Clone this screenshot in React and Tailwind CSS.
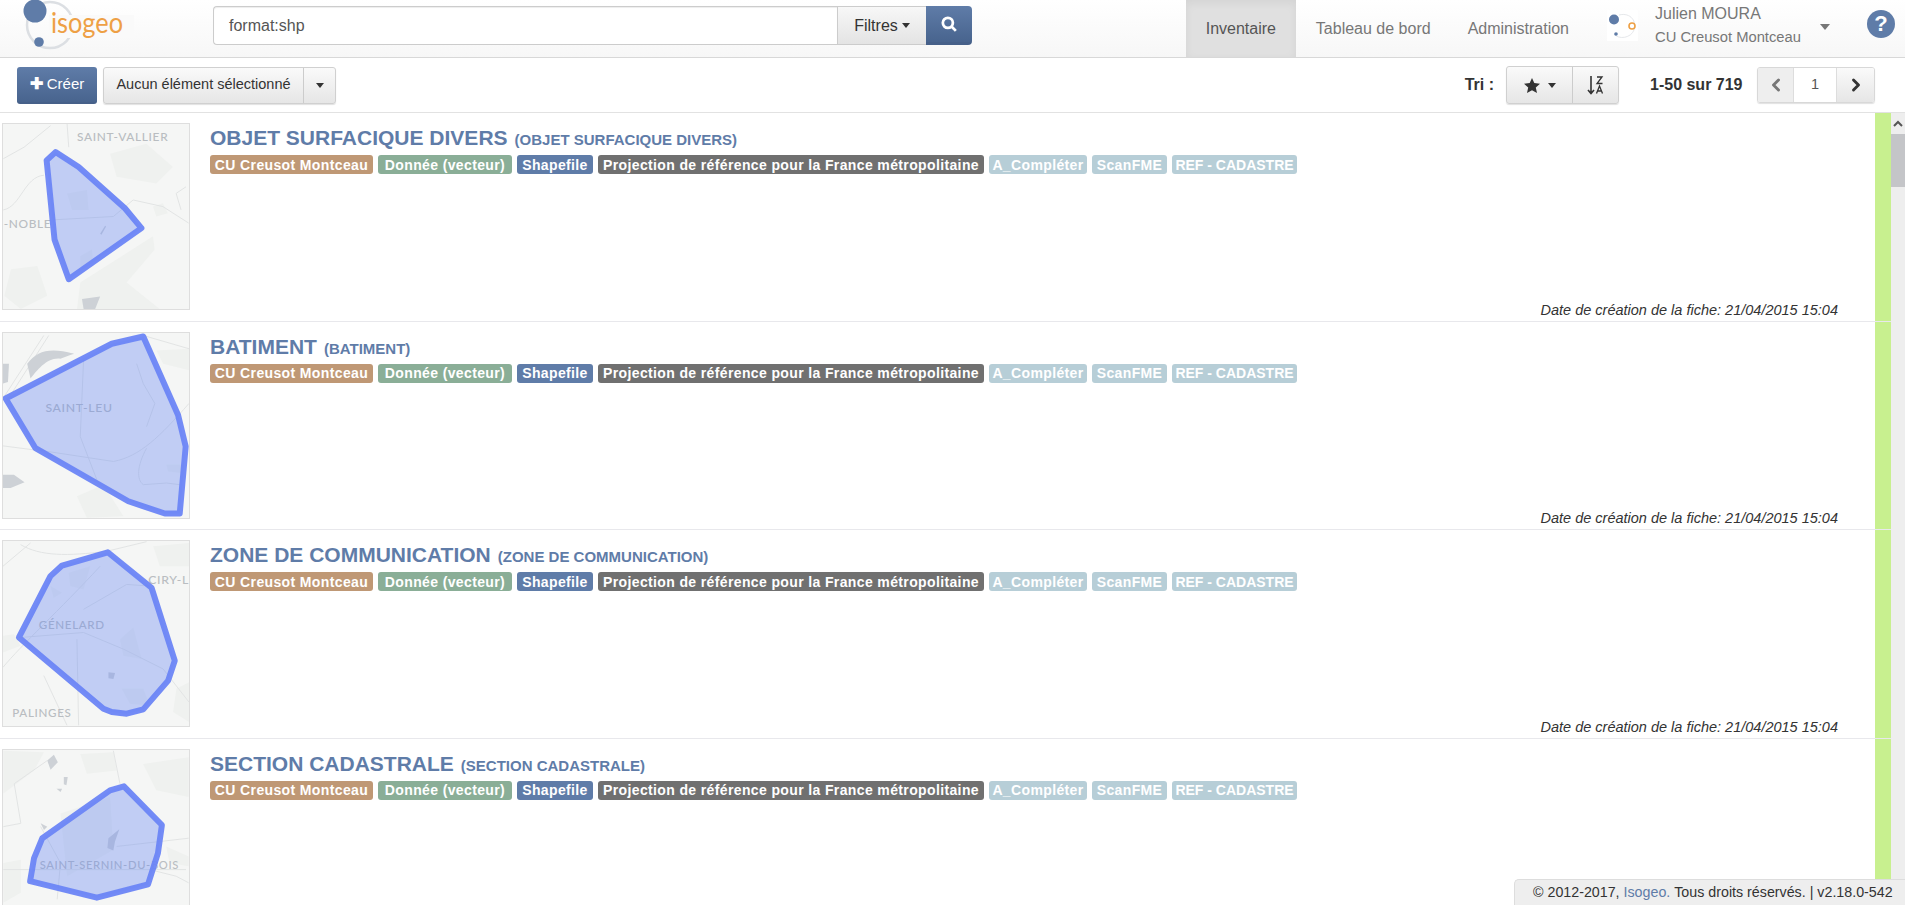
import { ChevronLeft, ChevronRight } from "lucide-react";

const FONT = "font-['Liberation_Sans',Arial,sans-serif]";

const RECORDS = [
  {
    title: "OBJET SURFACIQUE DIVERS",
    box: "7 40 561 560",
    poly: "165,125 138,150 162,390 205,510 425,355 375,295 235,170",
    roads: ["M7,145 L70,110 L150,45", "M7,300 C60,290 70,200 130,195", "M160,330 L340,320 L400,270 L490,290 L568,340", "M200,40 L205,110", "M560,230 L530,250 L545,300"],
    blobs: ["M200,250 L260,240 L265,300 L215,300 Z", "M240,440 L275,420 L280,470 L240,480 Z", "M30,480 L110,470 L140,560 L60,600 L10,560 Z", "M330,130 L440,100 L520,170 L470,220 L350,200 Z", "M240,520 L460,380 L465,420 L380,520 L480,600 L230,600 Z", "M460,290 L490,280 L505,310 L470,320 Z"],
    water: ["M245,570 L300,562 L285,600 L250,600 Z", "M300,372 L315,348 L318,350 L304,375 Z"],
    labels: [["SAINT-VALLIER", 230, 90, 36], ["-NOBLE", 8, 356, 36]],
    showDate: true,
  },
  {
    title: "BATIMENT",
    box: "7 38 561 557",
    poly: "430,48 335,70 15,235 105,385 385,545 495,582 540,582 558,380 535,285",
    roads: ["M7,235 L130,45", "M20,240 L145,45", "M430,45 L568,85", "M7,378 L100,390", "M110,390 L340,425 C420,410 480,350 568,250", "M440,385 C410,440 410,480 430,495 L500,490 L540,495", "M410,130 L430,190 L465,250 L440,320", "M250,120 L240,350 L290,480", "M130,100 L220,100"],
    blobs: ["M470,90 L568,85 L568,150 L490,130 Z", "M230,530 L310,495 L370,590 L260,595 Z", "M500,435 L548,435 L548,460 L505,455 Z"],
    water: ["M80,130 C110,90 150,80 220,100 L180,115 C140,110 110,150 90,175 Z", "M7,465 L40,465 L72,488 L30,505 L7,505 Z", "M7,130 L25,130 L22,185 L7,190 Z"],
    labels: [["SAINT-LEU", 135, 275, 37]],
    showDate: true,
  },
  {
    title: "ZONE DE COMMUNICATION",
    box: "7 34 561 558",
    poly: "323,68 185,108 150,140 55,325 310,540 335,550 380,555 430,542 505,455 525,395 455,175",
    roads: ["M60,45 C120,80 200,80 320,65 L440,36", "M7,415 C60,350 180,240 300,110", "M60,325 L250,310 L370,360 L490,420 L568,520", "M230,330 L235,590", "M250,240 L380,165 L450,170", "M90,40 L7,110", "M130,440 L200,590"],
    blobs: ["M360,330 L400,295 L425,390 L370,380 Z", "M365,480 L430,480 L450,530 L390,525 Z", "M205,130 L270,110 L250,180 L210,170 Z", "M150,170 L185,190 L160,205 Z", "M7,320 L40,315 L60,350 L7,370 Z", "M460,50 L568,40 L568,110 L480,110 Z", "M530,480 L568,460 L568,580 L520,550 Z"],
    water: ["M325,430 L345,432 L340,450 L325,448 Z"],
    labels: [["CIRY-L", 445, 165, 37], ["GÉNELARD", 115, 299, 35], ["PALINGES", 35, 565, 35]],
    showDate: true,
  },
  {
    title: "SECTION CADASTRALE",
    box: "7 658 561 560",
    poly: "372,768 330,780 125,925 100,985 88,1055 290,1105 445,1065 475,970 487,885",
    roads: ["M40,760 L140,690", "M40,760 L60,880 L7,890", "M340,660 L360,760", "M120,890 L180,1000 L170,1110", "M350,950 L568,925", "M450,1020 L530,1040 L568,1060", "M7,1020 L560,1020"],
    blobs: ["M180,850 L330,800 L340,960 L200,1040 Z", "M7,660 L130,665 L100,720 L7,790 Z", "M240,670 L340,665 L350,720 L260,730 Z", "M430,700 L568,680 L568,800 L470,780 Z", "M500,950 L568,980 L568,1010 L510,1000 Z", "M7,1000 L60,990 L60,1090 L7,1120 Z"],
    water: ["M140,690 L160,672 L172,695 L150,718 Z", "M190,740 L202,740 L198,765 L190,762 Z", "M168,775 L185,775 L180,785 Z", "M325,925 L358,898 L345,935 L340,962 L322,955 Z", "M120,880 L140,890 L130,900 Z"],
    labels: [["SAINT-SERNIN-DU-BOIS", 117, 1017, 34]],
    showDate: false,
  },
];

const TAGS = [
  ["CU Creusot Montceau", "bg-[#bf9875]", "w-[163px] tracking-[0.37px]"],
  ["Donnée (vecteur)", "bg-[#8aae97]", "w-[134px] tracking-[0.37px]"],
  ["Shapefile", "bg-[#5f7ca8]", "w-[76px] tracking-[0.37px]"],
  ["Projection de référence pour la France métropolitaine", "bg-[#707070]", "w-[386px] tracking-[0.37px]"],
  ["A_Compléter", "bg-[#b7ced7]", "w-[98px] tracking-[0.37px]"],
  ["ScanFME", "bg-[#b7ced7]", "w-[75px] tracking-[0.37px]"],
  ["REF - CADASTRE", "bg-[#b7ced7]", "w-[125px]"],
];

function Caret({ className = "" }) {
  return <span className={`inline-block border-x-[4px] border-t-[5px] border-x-transparent border-t-current ${className}`} />;
}

function Logo() {
  return (
    <svg width="125" height="56" viewBox="0 0 125 56" className="shrink-0">
      <circle cx="34" cy="25" r="23" fill="none" stroke="#dcdfe3" strokeWidth="2.5" />
      <circle cx="19" cy="11" r="11.5" fill="#5f7ca8" />
      <circle cx="23" cy="42" r="4.8" fill="#5f7ca8" />
      <rect x="33" y="15" width="85" height="23" fill="#fafafa" />
      <text x="35" y="33" fontFamily="Lato, sans-serif" fontSize="29" fill="#eea045" textLength="72" lengthAdjust="spacingAndGlyphs">isogeo</text>
    </svg>
  );
}

function Avatar() {
  return (
    <svg width="31" height="31" viewBox="0 0 31 31" className="bg-white">
      <path d="M12 5 C24 2 30 12 27 20 C24 28 12 30 7 24" fill="none" stroke="#e6e8eb" strokeWidth="1" />
      <circle cx="7" cy="9.5" r="5" fill="#5f7ca8" />
      <circle cx="9" cy="24" r="1.8" fill="#5f7ca8" />
      <circle cx="25" cy="16" r="3" fill="#fff" stroke="#eea045" strokeWidth="1.6" />
    </svg>
  );
}

function Header() {
  return (
    <header className="h-[58px] shrink-0 flex border-b border-[#d8d8d8] bg-gradient-to-b from-white to-[#f7f7f7]">
      <div className="pl-[16px] w-[213px] shrink-0">
        <Logo />
      </div>
      <div className="mt-[6px] h-[39px] w-[759px] flex text-[16px]">
        <div className="flex-1 flex items-center pl-[15px] bg-white border border-[#ccc] rounded-l-[4px] border-r-0 text-[#555] shadow-[inset_0_1px_1px_rgba(0,0,0,0.075)]">
          format:shp
        </div>
        <div className="w-[89px] flex items-center justify-center gap-[4px] border border-[#ccc] border-r-0 bg-gradient-to-b from-[#f7f7f7] to-[#e4e4e4] text-[#333]">
          Filtres <Caret />
        </div>
        <div className="w-[46px] flex items-center justify-center rounded-r-[4px] bg-gradient-to-b from-[#5f7ca8] to-[#48648e] border-b-[3px] border-[#466089]">
          <svg width="16" height="16" viewBox="0 0 14 14" fill="none" stroke="#fff" strokeWidth="2.4">
            <circle cx="6" cy="6" r="4.4" />
            <path d="M9.2 9.2 L13 13" />
          </svg>
        </div>
      </div>
      <nav className="ml-auto flex text-[16px] text-[#777]">
        <div className="w-[110px] h-[57px] flex items-center justify-center bg-[#e0e0e0] text-[#555] shadow-[inset_0_3px_9px_rgba(0,0,0,0.06)]">Inventaire</div>
        <div className="pl-[20px] pr-[19px] flex items-center whitespace-nowrap">Tableau de bord</div>
        <div className="pl-[18px] flex items-center">Administration</div>
      </nav>
      <div className="ml-[38px] mt-[10px] shrink-0">
        <Avatar />
      </div>
      <div className="ml-[17px] w-[145px] shrink-0 text-[#777] whitespace-nowrap">
        <div className="text-[16px] leading-[18px] mt-[5px]">Julien MOURA</div>
        <div className="text-[14.75px] leading-[16px] mt-[6px]">CU Creusot Montceau</div>
      </div>
      <div className="ml-[20px] mt-[24px] text-[#777] h-fit flex">
        <Caret className="border-x-[5px] border-t-[6px]" />
      </div>
      <div className="ml-[37px] mr-[10px] mt-[10px] w-[28px] h-[28px] rounded-full bg-[#5f7ca8] text-white flex items-center justify-center font-bold text-[22px] leading-none">
        ?
      </div>
    </header>
  );
}

function Toolbar() {
  return (
    <div className="h-[55px] shrink-0 flex items-center border-b border-[#e2e2e2] bg-white pl-[17px] pr-[30px] text-[14.5px]">
      <div className="h-[37px] w-[80px] rounded-[3px] flex items-center justify-center gap-[4px] text-[15px] text-white bg-gradient-to-b from-[#5f7ca8] to-[#48648e] border-b-[2px] border-[#466089]">
        <span className="font-bold text-[16px] leading-none">✚</span>Créer
      </div>
      <div className="ml-[6px] h-[37px] w-[233px] flex rounded-[3px] border border-[#d0d0d0] text-[#333] bg-gradient-to-b from-[#fafafa] to-[#e6e6e6] shadow-[0_1px_1px_rgba(0,0,0,0.12)]">
        <div className="w-[200px] flex items-center justify-center border-r border-[#ccc] whitespace-nowrap">Aucun élément sélectionné</div>
        <div className="flex-1 flex items-center justify-center"><Caret /></div>
      </div>
      <div className="ml-auto font-bold text-[16px] text-[#333] whitespace-nowrap">Tri :</div>
      <div className="ml-[12px] h-[38px] w-[113px] flex rounded-[3px] border border-[#d0d0d0] text-[#333] bg-gradient-to-b from-[#fafafa] to-[#e6e6e6] shadow-[0_1px_1px_rgba(0,0,0,0.12)]">
        <div className="w-[66px] flex items-center justify-center gap-[8px] border-r border-[#ccc]">
          <svg width="16" height="15" viewBox="0 0 16 15" fill="#333"><path d="M8 0 L10.3 5 L16 5.7 L11.8 9.4 L13 15 L8 12.2 L3 15 L4.2 9.4 L0 5.7 L5.7 5 Z" /></svg>
          <Caret />
        </div>
        <div className="flex-1 flex items-center justify-center">
          <svg width="18" height="20" viewBox="0 0 18 20" fill="none" stroke="#333">
            <path d="M4 1 V18 M1 15 L4 18.5 L7 15" strokeWidth="1.6" />
            <path d="M10 2 H15 L10 8.5 H15.5" strokeWidth="1.3" />
            <path d="M9.5 18.5 L12.5 11 L15.5 18.5 M10.7 16 H14.3" strokeWidth="1.3" />
          </svg>
        </div>
      </div>
      <div className="ml-[31px] font-bold text-[16px] text-[#333] w-[94px] whitespace-nowrap">1-50 sur 719</div>
      <div className="ml-[13px] h-[36px] w-[118px] flex rounded-[3px] border border-[#d8d8d8] shadow-[0_1px_1px_rgba(0,0,0,0.12)] overflow-hidden">
        <div className="w-[35px] flex items-center justify-center bg-[#eee] text-[#777]">
          <ChevronLeft size={20} strokeWidth={3.5} />
        </div>
        <div className="w-[44px] flex items-center justify-center bg-white border-x border-[#ddd] text-[#555]">1</div>
        <div className="flex-1 flex items-center justify-center bg-gradient-to-b from-[#fafafa] to-[#e6e6e6] text-[#333]">
          <ChevronRight size={20} strokeWidth={3.5} />
        </div>
      </div>
    </div>
  );
}

function MapThumb({ record }) {
  return (
    <svg viewBox={record.box} className="w-[188px] h-[187px] shrink-0 border border-[#dedede] bg-[#f5f6f5]">
      {record.blobs.map((d, i) => <path key={i} d={d} fill="#eff1ef" />)}
      {record.roads.map((d, i) => <path key={i} d={d} fill="none" stroke="#e2e4e4" strokeWidth="3" />)}
      {record.water.map((d, i) => <path key={i} d={d} fill="#cdd1d6" />)}
      {record.labels.map(([label, x, y, size]) => (
        <text key={label} x={x} y={y} fontFamily="Lato, sans-serif" fontSize={size} fontWeight="500" letterSpacing="2" fill="#b9bdc1">{label}</text>
      ))}
      <polygon points={record.poly} fill="#6b8cf2" fillOpacity="0.38" stroke="#6b85f6" strokeOpacity="0.95" strokeWidth="18" strokeLinejoin="round" />
    </svg>
  );
}

function Row({ record }) {
  return (
    <div className="h-[208.5px] shrink-0 flex border-b border-[#e8e8ec]">
      <div className="flex-1 min-w-0 relative flex pl-[2px] pt-[10px]">
        <MapThumb record={record} />
        <div className="ml-[20px] pt-[3px]">
          <div className="flex items-baseline whitespace-nowrap text-[#5f7ca8] font-bold">
            <span className="text-[21px] leading-[24px]">{record.title}</span>
            <span className="ml-[7px] text-[15px] leading-[24px]">({record.title})</span>
          </div>
          <div className="mt-[3px] flex gap-[5px]">
            {TAGS.map(([label, bg, width]) => (
              <span key={label} className={`${bg} ${width} h-[19px] rounded-[3px] flex items-center justify-center whitespace-nowrap text-white font-bold text-[14px] leading-none`}>
                {label}
              </span>
            ))}
          </div>
        </div>
        {record.showDate && (
          <div className="absolute right-[37px] bottom-[2px] italic text-[14.5px] leading-[18px] text-[#333]">
            Date de création de la fiche: 21/04/2015 15:04
          </div>
        )}
      </div>
      <div className="w-[16px] shrink-0 bg-[#c8f08f]" />
    </div>
  );
}

export default function App() {
  return (
    <div className={`h-screen flex flex-col overflow-hidden bg-white ${FONT}`}>
      <Header />
      <Toolbar />
      <div className="flex-1 min-h-0 flex relative">
        <div className="flex-1 min-w-0 flex flex-col overflow-hidden">
          {RECORDS.map((record) => <Row key={record.title} record={record} />)}
        </div>
        <div className="w-[14px] shrink-0 bg-[#eee] flex flex-col">
          <div className="h-[21px] flex items-center justify-center">
            <svg width="10" height="7" viewBox="0 0 10 7" fill="none" stroke="#555" strokeWidth="2"><path d="M1 6 L5 2 L9 6" /></svg>
          </div>
          <div className="h-[53px] bg-[#c4c5c8]" />
        </div>
        <div className="absolute right-0 bottom-0 w-[391px] h-[26px] rounded-tl-[5px] border-t border-l border-[#ddd] bg-[#eee] flex items-center pl-[18px] text-[14.25px] text-[#333] whitespace-nowrap">
          © 2012-2017,&nbsp;<span className="text-[#5f7ca8]">Isogeo.</span>&nbsp;Tous droits réservés. | v2.18.0-542
        </div>
      </div>
    </div>
  );
}
